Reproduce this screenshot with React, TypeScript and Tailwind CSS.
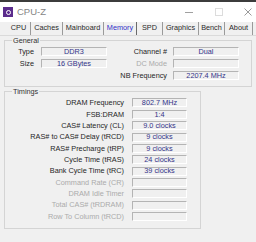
import React from 'react';

// Tabs across the top of the window, widths taken from the separators
const TABS = [
    { name: 'CPU', w: 'w-[24px]' },
    { name: 'Caches', w: 'w-[32px]' },
    { name: 'Mainboard', w: 'w-[41px]' },
    { name: 'Memory', w: 'w-[33px]' },
    { name: 'SPD', w: 'w-[26px]' },
    { name: 'Graphics', w: 'w-[36px]' },
    { name: 'Bench', w: 'w-[26px]' },
    { name: 'About', w: 'w-[28px]' },
];

const TIMINGS = [
    { label: 'DRAM Frequency', value: '802.7 MHz' },
    { label: 'FSB:DRAM', value: '1:4' },
    { label: 'CAS# Latency (CL)', value: '9.0 clocks' },
    { label: 'RAS# to CAS# Delay (tRCD)', value: '9 clocks' },
    { label: 'RAS# Precharge (tRP)', value: '9 clocks' },
    { label: 'Cycle Time (tRAS)', value: '24 clocks' },
    { label: 'Bank Cycle Time (tRC)', value: '39 clocks' },
    { label: 'Command Rate (CR)', value: '', disabled: true },
    { label: 'DRAM Idle Timer', value: '', disabled: true },
    { label: 'Total CAS# (tRDRAM)', value: '', disabled: true },
    { label: 'Row To Column (tRCD)', value: '', disabled: true },
];

// Sunken read-only field, like a classic win32 edit box
const Field: React.FC<{ value?: string; className?: string }> = ({ value, className }) => (
    <div
        className={`h-[9px] flex items-center justify-center border-t border-l border-t-[#b4b4b4] border-l-[#b4b4b4] border-b border-r border-b-white border-r-white bg-[#f0f0f0] text-[#34348a] leading-none ${className ?? ''}`}
    >
        {value}
    </div>
);

const Label: React.FC<{ text: string; disabled?: boolean; className?: string }> = ({ text, disabled, className }) => (
    <span className={`text-right leading-none whitespace-nowrap ${disabled ? 'text-[#ababab]' : 'text-[#262626]'} ${className ?? ''}`}>
        {text}
    </span>
);

const App: React.FC = () => {
    return (
        <div
            className="w-[256px] h-[242px] bg-[#f0f0f0] overflow-hidden text-[7.3px] flex flex-col"
            style={{ fontFamily: '"Liberation Sans", Arial, sans-serif' }}
        >
            {/* Title bar */}
            <div className="h-[22px] bg-white border-t-2 border-[#3c3c3c] flex items-center pl-[3px] shrink-0">
                <div className="w-[10px] h-[10px] bg-[#5b2c8c] flex items-center justify-center">
                    <div className="w-[5px] h-[5px] rounded-full border border-white" />
                </div>
                <span className="ml-[4px] text-[9.5px] text-[#858585] leading-none">CPU-Z</span>
                <div className="ml-auto flex items-center">
                    <div className="w-[8px] h-px bg-[#a0a0a0] mr-[22px]" />
                    <div className="w-[8px] h-[8px] border border-[#dcdcdc] mr-[21px]" />
                    <svg width="8" height="8" viewBox="0 0 8 8" className="mr-[4px]">
                        <path d="M0.5 0.5 L7.5 7.5 M7.5 0.5 L0.5 7.5" stroke="#909090" strokeWidth="0.9" />
                    </svg>
                </div>
            </div>

            {/* Tab strip */}
            <div className="h-[14px] flex items-stretch pl-[7px] border-b border-[#dadada] shrink-0">
                {TABS.map((tab) => (
                    <div
                        key={tab.name}
                        className={`${tab.w} flex items-center justify-center border-r ${tab.name === 'Memory' ? 'text-[#3030c8] border-[#6a6a6a]' : 'text-[#2a2a2a] border-[#9a9a9a]'}`}
                    >
                        {tab.name}
                    </div>
                ))}
            </div>

            {/* General */}
            <fieldset className="mx-[4px] mt-[1px] h-[50px] border border-[#d4d4d4] px-[4px] pb-[2px]">
                <legend className="ml-[3px] px-[1px] text-[#333] leading-none">General</legend>
                <div className="flex items-start mt-[3px]">
                    <div className="grid grid-cols-[25px_66px] gap-x-[7px] gap-y-[3px] items-center">
                        <Label text="Type" />
                        <Field value="DDR3" />
                        <Label text="Size" />
                        <Field value="16 GBytes" />
                    </div>
                    <div className="ml-auto grid grid-cols-[auto_66px] gap-x-[6px] gap-y-[3px] items-center mr-[8px]">
                        <Label text="Channel #" />
                        <Field value="Dual" />
                        <Label text="DC Mode" disabled />
                        <Field />
                        <Label text="NB Frequency" />
                        <Field value="2207.4 MHz" />
                    </div>
                </div>
            </fieldset>

            {/* Timings */}
            <fieldset className="ml-[4px] w-[197px] mt-[1px] h-[141px] border border-[#d4d4d4] pl-[2px] pr-[13px]">
                <legend className="ml-[5px] px-[1px] text-[#333] leading-none">Timings</legend>
                <div className="grid grid-cols-[1fr_55px] gap-x-[8px] auto-rows-[11.35px] items-center mt-[2px]">
                    {TIMINGS.map((t) => (
                        <React.Fragment key={t.label}>
                            <Label text={t.label} disabled={t.disabled} />
                            <Field value={t.value} />
                        </React.Fragment>
                    ))}
                </div>
            </fieldset>
        </div>
    );
};

export default App;
